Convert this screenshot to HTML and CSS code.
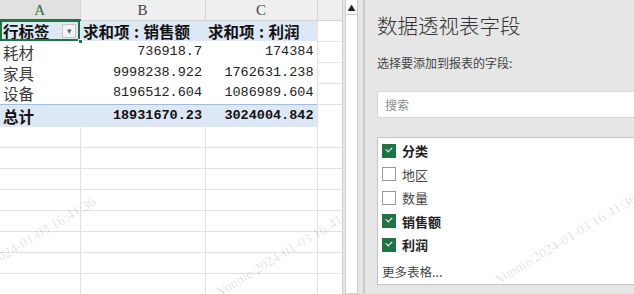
FILE: index.html
```html
<!DOCTYPE html>
<html lang="zh-CN">
<head>
    <meta charset="UTF-8">
    <title>数据透视表字段</title>
    <link rel="stylesheet" href="styles.css">
</head>
<body>
    <div class="screen">
        <div class="sheet">
            <table class="grid">
                <colgroup>
                    <col class="col-a">
                    <col class="col-b">
                    <col class="col-c">
                    <col class="col-d">
                </colgroup>
                <tr class="colhead">
                    <th class="sel">A</th>
                    <th>B</th>
                    <th>C</th>
                    <th></th>
                </tr>
                <tr class="pv-head">
                    <td class="active">行标签<span class="drop">&#9662;</span><span class="handle"></span></td>
                    <td>求和项<span class="colon">:</span>销售额</td>
                    <td>求和项<span class="colon">:</span>利润</td>
                    <td class="plain"></td>
                </tr>
                <tr class="pv-row">
                    <td>耗材</td>
                    <td class="num">736918.7</td>
                    <td class="num">174384</td>
                    <td class="plain"></td>
                </tr>
                <tr class="pv-row">
                    <td>家具</td>
                    <td class="num">9998238.922</td>
                    <td class="num">1762631.238</td>
                    <td class="plain"></td>
                </tr>
                <tr class="pv-row">
                    <td>设备</td>
                    <td class="num">8196512.604</td>
                    <td class="num">1086989.604</td>
                    <td class="plain"></td>
                </tr>
                <tr class="pv-total">
                    <td>总计</td>
                    <td class="num">18931670.23</td>
                    <td class="num">3024004.842</td>
                    <td class="plain"></td>
                </tr>
                <tr class="empty"><td></td><td></td><td></td><td></td></tr>
                <tr class="empty"><td></td><td></td><td></td><td></td></tr>
                <tr class="empty"><td></td><td></td><td></td><td></td></tr>
                <tr class="empty"><td></td><td></td><td></td><td></td></tr>
                <tr class="empty"><td></td><td></td><td></td><td></td></tr>
                <tr class="empty"><td></td><td></td><td></td><td></td></tr>
                <tr class="empty"><td></td><td></td><td></td><td></td></tr>
                <tr class="empty"><td></td><td></td><td></td><td></td></tr>
            </table>
            <!-- 水印 -->
            <span class="mark mark-1">Vonnie/2024-01-03 16:41:36</span>
            <span class="mark mark-2">Vonnie/2024-01-03 16:41:36</span>
        </div>
        <div class="gutter"></div>
        <div class="vscroll">
            <div class="arrow">&#9650;</div>
        </div>
        <div class="panel">
            <h1 class="title">数据透视表字段</h1>
            <p class="hint">选择要添加到报表的字段:</p>
            <div class="search">搜索</div>
            <ul class="fields">
                <li class="on"><span class="box"></span>分类</li>
                <li><span class="box"></span>地区</li>
                <li><span class="box"></span>数量</li>
                <li class="on"><span class="box"></span>销售额</li>
                <li class="on"><span class="box"></span>利润</li>
                <li class="more">更多表格...</li>
            </ul>
            <span class="mark mark-3">Vonnie/2024-01-03 16:41:36</span>
        </div>
    </div>
</body>
</html>
```

FILE: styles.css
```css
* {
    box-sizing: border-box;
}
html, body {
    margin: 0;
    padding: 0;
    background-color: #fff;
}
.screen {
    display: flex;
    width: 634px;
    height: 294px;
    overflow: hidden;
    font-family: "Noto Sans CJK SC", sans-serif;
}

/* 表格 */
.sheet {
    position: relative;
    width: 342px;
    flex: none;
    overflow: hidden;
}
.grid {
    border-collapse: collapse;
    table-layout: fixed;
    width: 342px;
}
.col-a { width: 80px; }
.col-b { width: 125px; }
.col-c { width: 112px; }
.col-d { width: 25px; }

.grid td, .grid th {
    padding: 0 3px;
    height: 21px;
    white-space: nowrap;
    overflow: visible;
}
.colhead th {
    height: 20px;
    background-color: #efefef;
    border-right: 1px solid #d8d8d8;
    border-bottom: 1px solid #d4d4d4;
    font-family: "Liberation Serif", serif;
    font-weight: normal;
    font-size: 15px;
    color: #444;
    text-align: center;
    line-height: 18px;
}
.colhead th.sel {
    background-color: #e1e1e1;
    color: #217346;
    border-bottom: 2px solid #217346;
}

.pv-head td {
    background-color: #dde8f4;
    font-weight: 700;
    font-size: 15.5px;
    color: #111;
    line-height: 20px;
}
.colon {
    display: inline-block;
    width: 0.9em;
    text-align: center;
}
.pv-head td.active {
    position: relative;
    outline: 2px solid #217346;
    outline-offset: -2px;
}
.drop {
    position: absolute;
    left: 62px;
    top: 3px;
    width: 14px;
    height: 14px;
    border: 1px solid #c6c6c6;
    background-color: #f3f3f3;
    font-size: 9px;
    line-height: 12px;
    text-align: center;
    color: #666;
    font-weight: normal;
}
.handle {
    position: absolute;
    right: -3px;
    bottom: -3px;
    width: 5px;
    height: 5px;
    background-color: #217346;
    border: 1px solid #fff;
}

.pv-row td {
    font-size: 15.5px;
    color: #3a3a3a;
    line-height: 20px;
}
.num {
    text-align: right;
    font-family: "Liberation Mono", monospace;
    font-size: 13.5px !important;
    color: #222 !important;
}
.pv-total td {
    background-color: #dde8f4;
    border-top: 1px solid #9dbfe4;
    font-size: 15.5px;
    font-weight: 700;
    color: #111;
}
.pv-total .num {
    font-weight: 700;
    color: #111 !important;
}
td.plain {
    background-color: #fff !important;
    border-top: 1px solid #e1e1e1 !important;
    border-left: 1px solid #e1e1e1;
}
.empty td {
    border: 1px solid #e1e1e1;
    border-top: none;
}
.empty td:first-child {
    border-left: none;
}

/* 滚动条 */
.gutter {
    width: 3px;
    flex: none;
    background-color: #e6e6e6;
    border-left: 1px solid #cfcfcf;
}
.vscroll {
    width: 13px;
    flex: none;
    background-color: #fff;
    border: 1px solid #cdcdcd;
    border-top: none;
}
.arrow {
    height: 15px;
    font-size: 8px;
    line-height: 15px;
    text-align: center;
    color: #222;
    border-bottom: 1px solid #cdcdcd;
}

/* 字段面板 */
.panel {
    position: relative;
    flex: 1;
    background-color: #e6e6e6;
    border-left: 5px solid #e6e6e6;
    box-shadow: inset 2px 0 0 #cbcbcb;
    padding: 11px 0 0 14px;
    margin-right: -10px;
    overflow: hidden;
}
.title {
    margin: 0;
    font-size: 20.5px;
    font-weight: 300;
    color: #333;
    line-height: 28px;
}
.hint {
    margin: 16px 0 0;
    font-size: 12px;
    color: #444;
    line-height: 16px;
}
.search {
    margin-top: 20px;
    height: 27px;
    background-color: #fff;
    border: 1px solid #d6d6d6;
    padding-left: 7px;
    font-size: 12px;
    line-height: 25px;
    color: #8a8a8a;
}
.fields {
    list-style: none;
    margin: 19px 0 0;
    padding: 1px 0 0 4px;
    height: 148px;
    background-color: #fff;
    border: 1px solid #c4c4c4;
}
.fields li {
    display: flex;
    align-items: center;
    height: 23.5px;
    font-size: 13px;
    color: #444;
}
.fields li.on {
    font-weight: 700;
    color: #222;
}
.box {
    width: 14px;
    height: 14px;
    margin-right: 6px;
    border: 1px solid #9a9a9a;
    background-color: #fff;
    position: relative;
}
.on .box {
    background-color: #217346;
    border-color: #217346;
}
.on .box::after {
    content: '';
    position: absolute;
    left: 3px;
    top: 2px;
    width: 5px;
    height: 3px;
    border-left: 1.5px solid #fff;
    border-bottom: 1.5px solid #fff;
    transform: rotate(-45deg);
}
.fields li.more {
    margin-top: 3px;
    font-size: 12.5px;
}

/* 水印 */
.mark {
    position: absolute;
    font-family: "Liberation Serif", serif;
    font-size: 14px;
    line-height: 16px;
    color: rgba(0, 0, 0, 0.13);
    white-space: nowrap;
    transform: rotate(-31deg);
    transform-origin: left bottom;
    pointer-events: none;
}
.mark-1 {
    left: -40px;
    top: 275px;
}
.mark-2 {
    left: 222px;
    top: 284px;
}
.mark-3 {
    left: 138px;
    top: 272px;
}
```
